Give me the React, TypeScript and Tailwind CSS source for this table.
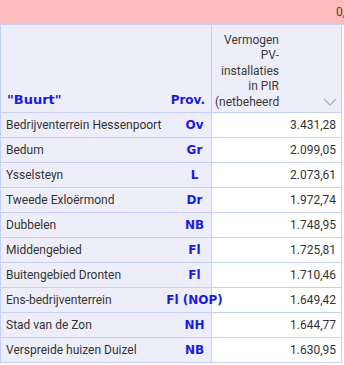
import React from 'react';

const rows = [
  { name: 'Bedrijventerrein Hessenpoort', prov: 'Ov', value: '3.431,28' },
  { name: 'Bedum', prov: 'Gr', value: '2.099,05' },
  { name: 'Ysselsteyn', prov: 'L', value: '2.073,61' },
  { name: 'Tweede Exloërmond', prov: 'Dr', value: '1.972,74' },
  { name: 'Dubbelen', prov: 'NB', value: '1.748,95' },
  { name: 'Middengebied', prov: 'Fl', value: '1.725,81' },
  { name: 'Buitengebied Dronten', prov: 'Fl', value: '1.710,46' },
  { name: 'Ens-bedrijventerrein', prov: 'Fl (NOP)', value: '1.649,42' },
  { name: 'Stad van de Zon', prov: 'NH', value: '1.644,77' },
  { name: 'Verspreide huizen Duizel', prov: 'NB', value: '1.630,95' },
];

const bold = "font-['DejaVu_Sans',sans-serif] font-bold text-[12px] text-[#1b1be0]";

export default function App() {
  return (
    <div className="w-[344px] h-[365px] overflow-hidden bg-white font-['Roboto',sans-serif] text-[12px] text-[#333]">
      <div className="h-[25px] bg-[#ffbcbc] border-b border-[#c3cff5] whitespace-nowrap pl-[336px] leading-[24px] text-[#444]">
        0,0
      </div>

      <div className="w-[342px]">
        {/* header */}
        <div className="flex h-[88px] border-b border-[#c3cff5] bg-[#eeeefa]">
          <div className="w-[212px] border-x border-[#c3cff5] flex items-end justify-between pl-[6px] pr-[6px] pb-[3px]">
            <span className={`${bold} text-[13px]`}>"Buurt"</span>
            <span className={bold}>Prov.</span>
          </div>
          <div className="w-[130px] border-r border-[#c3cff5] flex items-end pl-[3px] pb-[2px]">
            <div className="w-[64px] overflow-hidden text-right leading-[15.5px] text-[#3a3a3a]">
              Vermogen PV-installaties in PIR <span className="whitespace-nowrap">(netbeheerder)</span>
            </div>
            <svg className="ml-auto mr-[4px] mb-[4px]" width="14" height="8" viewBox="0 0 14 8">
              <path d="M1 1l6 6 6-6" fill="none" stroke="#b0b0b0" strokeWidth="1.4" />
            </svg>
          </div>
        </div>

        {/* body */}
        {rows.map((r) => (
          <div key={r.name} className="flex h-[25px] border-b border-[#c3cff5]">
            <div className="w-[212px] border-x border-[#c3cff5] bg-[#eeeefa] flex items-center">
              <span className="flex-1 pl-[5px] whitespace-nowrap">{r.name}</span>
              <span className={`${bold} w-[33px] flex justify-center whitespace-nowrap relative z-10`}>
                {r.prov}
              </span>
            </div>
            <div className="w-[130px] border-r border-[#c3cff5] bg-white flex items-center justify-end pr-[5px]">
              {r.value}
            </div>
          </div>
        ))}
      </div>
    </div>
  );
}
